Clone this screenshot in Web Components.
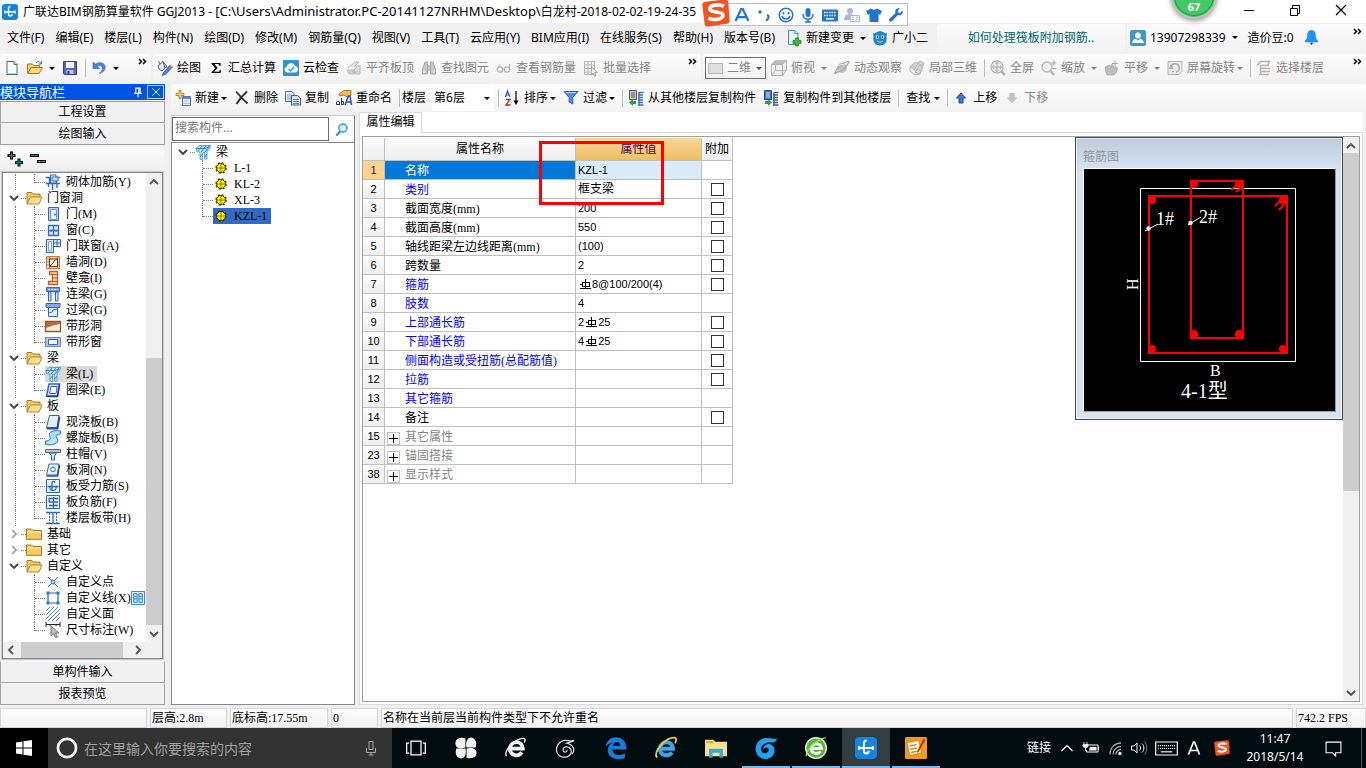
<!DOCTYPE html>
<html lang="zh-CN">
<head>
<meta charset="utf-8">
<title>广联达BIM钢筋算量软件 GGJ2013</title>
<style>
html,body{margin:0;height:100%}
body{background:#f0f0f0;overflow:hidden;color:#000;
  --ui:"Noto Sans","Noto Sans CJK SC",sans-serif;
  --song:"Liberation Serif","Noto Sans CJK SC",serif;
  font:12px/16px var(--ui)}
</style>
</head>
<body>
<ggj-app></ggj-app>
<script>
const BASE = `*{box-sizing:border-box}
button,input,select{font:inherit;color:inherit;margin:0;padding:0;border:0;background:none;border-radius:0}
button{white-space:nowrap}
a{color:inherit;text-decoration:none}`;

/* registers an element whose shadow root holds its styles and its markup (a string, or a function of the element) */
function define(name, css, html) {
  customElements.define(name, class extends HTMLElement {
    constructor() {
      super();
      this.attachShadow({ mode: 'open' });
    }
    connectedCallback() {
      const body = typeof html === 'function' ? html(this) : html;
      this.shadowRoot.innerHTML = `<style>${BASE}${css}</style>${body}`;
    }
  });
}

/* ---------- icons ---------- */
const B = '#2f66c4', L = '#cfe2fb', G = '#b4b4b4', G2 = '#e2e2e2';
const ICONS = {
  app: `<rect width="16" height="16" rx="3" fill="#1185e0"/><path d="M8.500 2.500c-1.800 0-2 1.200-2 2v5.500c0 1 .5 2 1.800 2s1.700-1 1.700-2M2.500 8h11M3 6.500v3M13 6.500v3" fill="none" stroke="#fff" stroke-width="1.500"/>`,
  newdoc: `<path d="M3 1.500h7l3 3v10H3z" fill="#fff" stroke="#51627c"/><path d="M10 1.500v3h3" fill="#d6e2f4" stroke="#51627c"/><path d="M4 13.500h8" stroke="#bcd0ee"/>`,
  open: `<path d="M.5 13V4h5l1 1.500h6V8" fill="#f6d468" stroke="#a57a1c"/><path d="M.8 13.500 4 7.500h11.500L12 13.500z" fill="#ffd978" stroke="#a57a1c"/><path d="M9 3c2-2.500 4-1.500 5 .5M14.500 1v3h-3" fill="none" stroke="#4d6fa6"/>`,
  save: `<path d="M1.500 1.500h13v13h-12l-1-1z" fill="#5a63c0" stroke="#343c8e"/><path d="M4 2h8v6H4z" fill="#f3f5fd"/><path d="M4.500 10h7v4h-7z" fill="#c3c7ea"/><path d="M5.500 11h2v3h-2z" fill="#343c8e"/>`,
  undo: `<path d="M2 2v6.500h6.500L6.300 6.300C9 4.500 12 6 11.300 9.300c-.3 1.500-1.300 2.800-3.300 4.200 4-.8 6.500-3.500 6.200-6.700C13.800 2.800 8.500 1.200 4.200 4.200z" fill="#4a83dc" stroke="#2e5fb4" stroke-width=".6"/>`,
  paint: `<path d="M1 6 6 1.500l4 5L5 11 2 9z" fill="#e2e9f2" stroke="#47607f"/><path d="M3 4 1.500 1M6 1.500 8 8" fill="none" stroke="#47607f"/><path d="M6 13 13 5l2.500 2-7 7.500-3 .8z" fill="#4a87d8" stroke="#254f8e" stroke-width=".7"/><path d="M12.500 5.500 14 4l2 2-1 1.500z" fill="#f2c24e"/>`,
  sigma: `<path d="M3.500 3h9v3h-1c-.5-1.400-1-1.900-2-1.900H6.500L9.700 8 6 11.700H9.700c1.300 0 1.800-.5 2.300-1.800h1L12.600 13H3.500v-.8L7.300 8.200 3.500 4z" fill="#000"/>`,
  cloud: `<rect width="16" height="16" rx="1" fill="#2b93dc"/><path d="M4 12.500a3 3 0 0 1-.3-5.800A4.300 4.300 0 0 1 12 6a3.300 3.300 0 0 1 .3 6.500z" fill="#fff"/><path d="m5.500 9 2 2 3.500-4" fill="none" stroke="#2b93dc" stroke-width="1.300"/>`,
  align: `<path d="M2 8 9 2h4L8 7M1 10h7v4H3zM8 9l6-4v9H9z" fill="${G2}" stroke="${G}"/><path d="M3 12h9" stroke="${G}"/>`,
  find: `<path d="M2 8 4 2h2.500v12H1.500V9zM14 8l-2-6H9.500v12h5V9zM6.500 6h3v4h-3z" fill="#c9c9c9" stroke="#a6a6a6"/><path d="M3 10v3M13 10v3" stroke="#eee"/>`,
  glasses: `<circle cx="4" cy="9.500" r="2.700" fill="none" stroke="${G}" stroke-width="1.300"/><circle cx="11" cy="9.500" r="2.700" fill="none" stroke="${G}" stroke-width="1.300"/><path d="M6.500 9h2M1.500 8l3-4M13.500 9V4" fill="none" stroke="${G}"/>`,
  batch: `<path d="M1.500 1.500h10v13h-10zM1.500 5h10M1.500 8.500h8M1.500 12h6M5 1.500v13M8.500 1.500v8" fill="none" stroke="${G}"/><path d="m8.500 7 6 5.500-3 .2 1.500 3-1.500.4-1.300-3-2 1.900z" fill="#f5f5f5" stroke="#a0a0a0"/>`,
  view2d: `<rect x=".5" y="3.500" width="14" height="10" fill="#dedede" stroke="#b5b5b5"/>`,
  cube: `<path d="M.5 4.500 4.500.5h11v10l-4 5H.5z" fill="#f1f1f1" stroke="${G}"/><path d="M.5 4.500 4.500.5h11l-4 4z" fill="#bdbdbd"/><path d="M11.500 4.500v11M.5 4.500h11l4-4M4.500 1v9.500h11M4.500 10.500l-4 5" fill="none" stroke="${G}"/>`,
  planet: `<circle cx="8" cy="8" r="5" fill="#c3c3c3"/><path d="M3 12c-4 4-2-1 2-5s12-8 9.500-4-7 9-11.500 9" fill="none" stroke="#a8a8a8" stroke-width="1.300"/><path d="M5 6c2-2 4-2 5-1" stroke="#eee" fill="none"/>`,
  local3d: `<path d="m1 7 5-5 3 2-4 6zM6 12l4-7 4 2-3 7zM8 3l3-2 4 2-1 3z" fill="#d7d7d7" stroke="${G}"/><path d="m3 5 4 3M8 9l4 2M1 7v4l5 4 5-1" fill="none" stroke="${G}"/>`,
  full: `<circle cx="7" cy="7" r="6" fill="#eee" stroke="${G}" stroke-width="1.300"/><path d="M7 2.500v9M2.500 7h9M5.500 4 7 2.300 8.500 4M5.500 10 7 11.700 8.500 10M4 5.500 2.300 7 4 8.500M10 5.500 11.700 7 10 8.500" fill="none" stroke="#a8a8a8"/><path d="m11 11 4 4" stroke="#b5b5b5" stroke-width="2.500"/>`,
  zoom: `<circle cx="6" cy="7" r="5" fill="#f2f2f2" stroke="${G}" stroke-width="1.300"/><path d="m9.500 11 3.500 4" stroke="#b5b5b5" stroke-width="2.500"/><path d="M10.500 3h5M13 .5v5M11.500 8.500h4" stroke="#a8a8a8" stroke-width="1.200"/>`,
  pan: `<path d="M3 15 1.500 11 1 7l2-.5 1 3-.5-4 2-.5 1.500 3V5l1.500-.5L10 8l1.500-1.500 2 1.500-1 4-2.500 3z" fill="#bebebe" stroke="#a9a9a9" stroke-width=".8"/><path d="M11 .5v6M8 3.500h6" stroke="#a8a8a8"/>`,
  rotate: `<path d="M1 1.500h14v10l-3 3H1z" fill="#e8e8e8" stroke="${G}"/><path d="M4 7a4.200 4.200 0 1 1 5 5" fill="none" stroke="#aaa" stroke-width="1.500"/><path d="m4 4.500-1.500 4H6zM5 11.500h2" fill="#bbb" stroke="#aaa"/>`,
  floors: `<path d="m1.500 5.500 3-4h9l-2 4M5 8.500h9M5 11.500h9M3 14.500h10M4 5.500h9M4.500 6v9" fill="none" stroke="${G}" stroke-width="1.400"/>`,
  change: `<path d="M2.500.5H9l3 3v11H2.500z" fill="#e5f4fc" stroke="#4a8fb5"/><path d="M9 .5v3h3" fill="#fff" stroke="#4a8fb5"/><path d="M9.500 8h3v2.500H15v3h-2.500V16h-3v-2.500H7v-3h2.500z" fill="#42b531" stroke="#1f7d17" stroke-width=".7"/>`,
  robot: `<path d="M1 3.500 3.500 3C6 .5 10 .5 12.500 3l2.500.5L14.500 7c1 5-2 8.500-6.500 8.500S.5 12 1.500 7z" fill="#1d86d2"/><circle cx="5.500" cy="7" r="1.700" fill="#fff"/><circle cx="10.500" cy="7" r="1.700" fill="#fff"/><circle cx="5.700" cy="7" r=".9" fill="#0a3a6a"/><circle cx="10.300" cy="7" r=".9" fill="#0a3a6a"/><path d="M5.500 11c1.500 1.500 3.500 1.500 5 0" fill="none" stroke="#d9f0ff"/>`,
  user: `<rect width="16" height="16" rx="2" fill="#3f96cc"/><circle cx="8" cy="5.500" r="2.900" fill="#fff"/><path d="M2 13c1-3.500 3-4.300 4-4.300l2 2 2-2c1 0 3 .8 4 4.300z" fill="#fff"/>`,
  bell: `<path d="M8 0c-3.500.5-4.500 2.500-4.500 5.500C3.500 9 2.500 10 1 11.500V13h14v-1.500C13.500 10 12.500 9 12.500 5.500 12.500 2.500 11.500.5 8 0z" fill="#1e90ff"/><path d="M6 13.500h4L8 16z" fill="#123a78"/>`,
  create: `<path d="M4 .5h2v3h3v2H6v3H4v-3H1v-2h3z" fill="#ffdb48" stroke="#99752a" stroke-width=".8"/><path d="M7.500 6.500h8v9h-8z" fill="#fff" stroke="#5a76b0"/><path d="M8 7h7v2H8z" fill="#5f8bd2"/><path d="M8 11h7M8 13.500h7M11 9v6" stroke="#a8bfe4"/>`,
  remove: `<path d="M2 1.500c3 3.500 7 8 11.500 12M13 1.500C9 5 5 9.500 2.500 14" fill="none" stroke="#333" stroke-width="1.900"/>`,
  copy: `<path d="M.5 1.500h6l2.500 2v8H.5z" fill="#e7effc" stroke="#4a6fae"/><path d="M2 5h5M2 7h5M2 9h5" stroke="#7fa0d8"/><path d="M6.500 5.500h6l3 2.500v7h-9z" fill="#d6e4fa" stroke="#3b62a8"/><path d="M8 9.500h6M8 11.500h6M8 13.500h6" stroke="#5c86cf"/>`,
  rename: `<path d="M3 4 8 .5h7V5L12 7 7 5 4 6z" fill="#f2bd42" stroke="#8e6920" stroke-width=".8"/><path d="M.5 14.500v-2.500l1.500-1 1.500 1v2.500H.5M5.500 8v6.500h2v-3h-2" fill="none" stroke="#333"/><path d="m9 15 3.500-9h1.500l1.500 9M10.500 12h4" fill="none" stroke="#2457ad" stroke-width="1.500"/>`,
  sort: `<path d="m1.500 7 2-6 2.500 6M2 5h3.500" fill="none" stroke="#2f4fae" stroke-width="1.200"/><path d="M2 9.500h4L2 15h4.500" fill="none" stroke="#9c3434" stroke-width="1.300"/><path d="M12 1v12" stroke="#000" stroke-width="1.200"/><path d="M9.500 10.500h5L12 15z"/>`,
  filter: `<path d="M1 1.500h14L9.800 7.500V14l-3.600-2V7.500z" fill="#5690e4" stroke="#2b5dad"/><path d="M3 2.500h10" stroke="#bcd6fa"/>`,
  fromfloor: `<path d="M1.500.5h7v9h-7z" fill="#ccc" stroke="#555"/><path d="M3 3h4M3 5h4M3 7h4" stroke="#555"/><path d="M8 11H5V9L1 12.500 5 16v-2h3z" fill="#2f9b48"/><path d="M11 2.500h4.500M10 5h5M10 7.500h5M10 10h5M10 12.500h5M10 15h5.500M11 2v13" stroke="#3a72ca" stroke-width="1.400"/>`,
  tofloor: `<path d="M1.500.5h7v9h-7z" fill="#3f74c4" stroke="#294b85"/><path d="M3 3h4M3 5h4M3 7h4" stroke="#d7e5fa"/><path d="M2 11h3V9l4 3.500L5 16v-2H2z" fill="#2f9b48"/><path d="M11 2.500h4.500M10 5h5M10 7.500h5M10 10h5M10 12.500h5M10 15h5.500M11 2v13" stroke="#4a5a74" stroke-width="1.300"/>`,
  up: `<path d="M8 3 3.500 8H6v5h4V8h2.500z" fill="#3f74dc" stroke="#2348a0"/>`,
  down: `<path d="M8 12.500 3.500 8H6V3.500h4V8h2.500z" fill="#c4c4c4" stroke="#b5b5b5"/>`,
  folderopen: `<path d="M1 14V2.500h5L7.500 4H14v4" fill="#f0c860" stroke="#a37a2b"/><path d="M1.200 14 4.500 7H16l-3 7z" fill="#ffdf8b" stroke="#b38836"/>`,
  folder: `<path d="M.5 13.500V3h5L7 4.500h8.500v9z" fill="#f7cb63" stroke="#a37a2b"/><path d="M1 6h14" stroke="#fff0b8"/><path d="M1.500 13h13" stroke="#d9a839"/>`,
  masonry: `<path d="M1 3.500h14M1 9.500h14M4.500 4v5M11.500 4v5M3.500 10v3M7.500 10v6M12 10v4" fill="none" stroke="${B}" stroke-width="1.400"/><path d="M5.500 1h5.500v8H5.500z" fill="#eef5ff" stroke="${B}"/><path d="M7 3h6v4H7z" fill="${L}" stroke="${B}"/>`,
  door: `<path d="M3.500 1.500h10v13h-10z" fill="#b9d4fa" stroke="${B}"/><path d="M5.500 3.500h6v10h-6z" fill="#eef6ff" stroke="#6c98df"/><circle cx="10" cy="8.500" r="1" fill="${B}"/>`,
  window: `<path d="M3.500 3.500h10v10h-10zM8.500 3.500v10M3.500 8.500h10" fill="#d9e9ff" stroke="${B}" stroke-width="1.300"/><path d="M6 8v2M11 8v2" stroke="${B}"/>`,
  doorwin: `<path d="M1.500 1.500h7v13h-7zM8.500 1.500h7v7h-7zM12 1.500v7M8.500 5h7" fill="#dbeaff" stroke="${B}"/><path d="M3.500 3.500h3v9h-3z" fill="#fff" stroke="#7da6e6"/>`,
  wallhole: `<path d="M1.500 2.500h13v12h-13zM1.500 5h13M1.500 8h13M1.500 11h13M4.500 2.500v12M12.500 2.500v12" fill="#ffe9d3" stroke="#cb7434"/><path d="M4.500 5h8v7.500h-8z" fill="#fff" stroke="#6a3716"/><path d="m5 12 3-3 1-2 3-2" fill="none" stroke="#6a3716"/>`,
  niche: `<path d="M4.500 1.500h8v13h-9V11.500h4v-7h-3z" fill="#ffd3ac" stroke="#bc5f22" stroke-width="1.300"/><path d="M8 4.500h4M8 8h4M8 11.500h4" stroke="#bc5f22"/>`,
  linkbeam: `<path d="M1.500 1.500h13v4h-13z" fill="#6f9de4" stroke="${B}"/><path d="M3 3.500h10" stroke="#fff" stroke-dasharray="2 1"/><path d="M3.500 6h2.500v9H3.500zM10.500 6H13v9h-2.500z" fill="${L}" stroke="${B}"/>`,
  lintel: `<path d="M1 1.500h14v4H1z" fill="#80abeb" stroke="${B}"/><path d="M3.500 5.500h9v9h-9z" fill="#e9f3ff" stroke="${B}"/><path d="m4 11 3-1 1-2 4-1" fill="none" stroke="${B}"/>`,
  striphole: `<path d="M.5 3.500h15v10H.5z" fill="#fff0e2" stroke="#9f532a" stroke-width="1.300"/><path d="M1 10c4-1 6-3 14-4V4H1z" fill="#b96a3d"/>`,
  stripwin: `<path d="M.5 3.500h15v9H.5z" fill="#a7c5f5" stroke="#6a90cc"/><path d="M3.500 5.500h9v5h-9z" fill="#fff" stroke="${B}"/>`,
  beam: `<path d="m1 4.500 3-3h11.500l-1 3.500-2.500 2v8H9.500V8L7.500 9v6.500H5V8L2 8z" fill="#bde5fa" stroke="#3d96cf" stroke-width=".8"/><path d="M1 4.500h10l4-3M3 7l4-5M6 8l5-6M10 8l4-5M5 13l2.500-3M9.500 13l2.500-3" fill="none" stroke="#2c86c2"/>`,
  ring: `<path d="M4 2h10.500l-2 12H1.500z" fill="#dceaff" stroke="${B}" stroke-width="1.500"/><path d="M6 4.500h6l-1 7H4.500z" fill="#fff" stroke="${B}"/><path d="M1.500 14.500h11l2-12" fill="none" stroke="#1a3d8c" stroke-width="1.500"/>`,
  slab: `<path d="M4.500 1.500H14l-2 12H1.500z" fill="#e2eefe" stroke="${B}"/><path d="M1.500 14.500h11l2-12" fill="none" stroke="#254b96" stroke-width="1.800"/>`,
  spiral: `<path d="M15.500 1C9-.5 3 2 4.500 5.500 6 8.500 5 11 .5 11v3.500c7 1.500 14-1 12-5.500C10.500 6 10 4.500 15.500 4z" fill="#a9dcf5" stroke="#1e83b9"/><path d="M4 13c4 0 6-2 5-4" fill="none" stroke="#fff"/>`,
  cap: `<path d="M.5 3.500h15v3H.5z" fill="#c1c7cf" stroke="#5c6670"/><path d="M4.500 7h7L9.500 10v4h-3v-4z" fill="${L}" stroke="${B}"/>`,
  slabhole: `<path d="M4 2h10l-1.500 11H1.500z" fill="#e9f2ff" stroke="${B}"/><path d="M1.500 14h11L14.500 3" fill="none" stroke="#254b96" stroke-width="1.500"/><circle cx="8" cy="7.500" r="2.300" fill="#fff" stroke="${B}"/>`,
  rebar: `<path d="M1.500 1.500h13v13h-13z" fill="#eaf3ff" stroke="${B}"/><path d="M2.500 8.500h11M7 12V4.500C7 3 9.500 3 10 4.500M5 8.500c-1 3 1.500 4 3 4s4-1 3-4" fill="none" stroke="${B}" stroke-width="1.300"/>`,
  negrebar: `<path d="M1.500 1.500h13v13h-13z" fill="#eaf3ff" stroke="${B}"/><path d="M4 4.500h9M4 8h9M4 11.500h9M8.500 3v11M4 4v4" fill="none" stroke="${B}" stroke-width="1.300"/>`,
  strip: `<path d="M1 2.500h14M1 13.500h14" stroke="${B}" stroke-width="1.500"/><path d="M4.500 3v11M11.500 3v11" stroke="${B}" stroke-dasharray="2 1"/><path d="M8 3v10" stroke="${B}" stroke-width="1.300"/>`,
  point: `<path d="m3 3 10 10M13 3 3 13" stroke="${B}"/><circle cx="8" cy="8" r="2" fill="#a8d1fa" stroke="${B}"/>`,
  line: `<path d="M3 3h10v10H3z" fill="#f5faff" stroke="${B}" stroke-width="1.200"/><path d="M1.500 1.500h3v3h-3zM11.500 1.500h3v3h-3zM1.500 11.500h3v3h-3zM11.500 11.500h3v3h-3z" fill="#3a72ca"/>`,
  area: `<path d="M1 5 5 1M1 9l8-8M1 13 13 1M3 15 15 3M7 15l8-8M11 15l4-4" stroke="#4b84d6"/>`,
  dim: `<path d="M1 0v5M15 0v5M1 2.500h14M5 2v2M11 2v2" stroke="#222"/><path d="m6 4 8 7h-3.500l2 4-2 .8-2-4L6 14z" fill="#bbb" stroke="#777"/>`,
  gear: `<circle cx="8" cy="8" r="4.500" fill="#fff200" stroke="#1e1e00" stroke-width=".8"/><circle cx="8" cy="8" r="5.200" fill="none" stroke="#3a3a00" stroke-width="1.200" stroke-dasharray="2.200 1.880"/><path d="M8 4.500v7M4.500 8h7" stroke="#1e1e00" stroke-dasharray="1 1"/>`,
  search: `<circle cx="9.500" cy="6.500" r="4.300" fill="#d9f0ff" stroke="#49a5dc" stroke-width="1.800"/><path d="m6.500 10-4 4.500" stroke="#2b84c1" stroke-width="2.300"/>`,
  plusplus: `<path d="M.5 4.500h8M4.500.5v8M8 11.500h8M12 7.500v8" stroke="#000" stroke-width="3"/><path d="M1.500 4.500h6M4.500 1.500v6M9 11.500h6M12 8.500v6" stroke="#079090" stroke-width="1.200"/>`,
  minusminus: `<path d="M0 4.500h9M7 10.500h9" stroke="#000" stroke-width="3"/><path d="M1 4.500h7M8 10.500h7" stroke="#079090" stroke-width="1.200"/>`,
  pin: `<path d="M5 3.500h6M5.500 3.500v6M10.500 3.500v6M9 3.500v6M3.500 9.500h9M8 9.500V14" fill="none" stroke="#fff" stroke-width="1.300"/>`,
  close: `<path d="m3 3 10 10M13 3 3 13" stroke="currentColor" stroke-width="1.200"/>`,
  min: `<path d="M3 8.500h10" stroke="currentColor"/>`,
  restore: `<path d="M3.500 6.500h7v7h-7zM5.500 6V3.500h7v8H11" fill="none" stroke="currentColor"/>`,
  book: `<path d="M.5.5h15v15H.5z" fill="#eaf5ff" stroke="#1875c9"/><path d="M3 3h4v10H3zM9 3h4v10H9z" fill="#cbe6fc" stroke="#1875c9"/><path d="M3.500 6h3M3.500 9h3M9.500 6h3M9.500 9h3" stroke="#1875c9"/>`,
  chevd: `<path d="m4 6 4 4 4-4" fill="none" stroke="#404040" stroke-width="1.800"/>`,
  chevr: `<path d="m6 4 4 4-4 4" fill="none" stroke="#999" stroke-width="1.600"/>`,
  sup: `<path d="m4 11 4-4 4 4" fill="none" stroke="#555" stroke-width="1.900"/>`,
  sdown: `<path d="m4 6 4 4 4-4" fill="none" stroke="#555" stroke-width="1.900"/>`,
  sleft: `<path d="M10 4 6 8l4 4" fill="none" stroke="#555" stroke-width="1.900"/>`,
  sright: `<path d="m6 4 4 4-4 4" fill="none" stroke="#555" stroke-width="1.900"/>`,
  more: `<path d="m4 5 2.500 2.500L4 10M8 5l2.500 2.500L8 10" fill="none" stroke="#000" stroke-width="1.500"/>`,
  /* input method bar */
  sogou: `<path d="M2 1.500 13 .3c1.200 0 1.700.4 2 1.500l.8 10.500c0 1-.3 1.500-1.500 1.800L3.500 15.700c-1 .2-1.700-.2-2-1.300L.2 3.500C0 2.300.8 1.700 2 1.500z" fill="#f4511e"/><path d="M12.500 4.200C10 2.700 4.500 3.300 4.500 5.500c0 2.600 7.800 1.300 7.500 4-.2 2-5 3-8.300 1.400" fill="none" stroke="#fff" stroke-width="2.100"/>`,
  imeA: `<path d="m1.500 14 5.700-12h1.600l5.700 12M4 10.200h8" fill="none" stroke="#2176c9" stroke-width="2.200"/>`,
  punct: `<circle cx="4" cy="5" r="1.700" fill="#2176c9"/><path d="M11 8c2.500.5 2 4-1 5.500" fill="none" stroke="#2176c9" stroke-width="2"/>`,
  smile: `<circle cx="8" cy="8" r="6.800" fill="none" stroke="#2176c9" stroke-width="1.500"/><path d="M5.500 5v2.500M10.500 5v2.500" stroke="#2176c9" stroke-width="1.700"/><path d="M4 9c1 4 7 4 8 0" fill="none" stroke="#2176c9" stroke-width="1.500"/>`,
  mic: `<rect x="5.500" y="1" width="5" height="9" rx="2.500" fill="#2176c9"/><path d="M3 7c0 7 10 7 10 0M8 12v3M5 15h6" fill="none" stroke="#2176c9" stroke-width="1.500"/>`,
  kbd: `<rect y="2.500" width="16" height="12" rx="1" fill="#2176c9"/><path d="M2 5.500h12M2 8.500h12" stroke="#fff" stroke-width="1.500" stroke-dasharray="1.500 1"/><path d="M4 11.800h8" stroke="#fff" stroke-width="1.500"/>`,
  person: `<circle cx="6" cy="4" r="3" fill="#a9bad2"/><path d="M0 13c0-5 3-6 6-6s4 1 5 2v4z" fill="#a9bad2"/><path d="M6.500 8.500h9v6h-9z" fill="#fff" stroke="#a9bad2"/><path d="M8 10.500h2M12 10.500h2M8 12.500h2M12 12.500h2" stroke="#a9bad2"/>`,
  shirt: `<path d="M5 1.500c1 1.500 5 1.500 6 0l5 2.500-2 4-1.500-1v8h-9V7L2 8 0 4z" fill="#2176c9"/>`,
  wrench: `<path d="M14.500 3.500 12 6l-2-.5L9.700 3.800 12 1.500C9 .7 6.500 3 7.500 6l-6 5.700c-1.500 1.500.8 4 2.500 2.500l5.700-6C13 9 15.700 6.500 14.500 3.500z" fill="#2176c9"/>`,
  /* taskbar */
  win: `<path d="m0 2.500 6.500-1v6H0zM7.500 1.300 16 0v7.500H7.500zM0 8.500h6.500v6L0 13.500zM7.500 8.500H16V16l-8.500-1.200z" fill="#fff"/>`,
  cortana: `<circle cx="8" cy="8" r="6.600" fill="none" stroke="#f5f5f5" stroke-width="2"/>`,
  tmic: `<path d="M6 1.500h4v8H6zM3.500 8v4.500h9V8M8 12.500V15M5.500 15h5" fill="none" stroke="#aaa"/>`,
  taskview: `<path d="M4 2.500h8v11H4zM2.500 4h-2v8h2M13.500 4h2v8h-2" fill="none" stroke="#fff" stroke-width="1"/>`,
  fan: `<path d="M7.600 7.600C3 9 .3 7.500.3 4.500S3.500-.2 7.600 1zM8.400 7.600C7.500 3.500 9 .3 11.500.3s5 3 3.500 7.300zM8.400 8.400c4.500-1.200 7.300.5 7.300 3.200s-3 4.600-7.300 3.400zM7.600 8.400c.9 4.100-.5 7.300-3.100 7.300s-5-3-3.500-7.300z" fill="#f1f1f1"/>`,
  ewhite: `<path d="M3.500 8.500H13c0-6.500-9-6-9.500 0 .2 5.500 6.500 6 8.800 2.700" fill="none" stroke="#f1f1f1" stroke-width="2.700"/><path d="M1 14C-1 10 7 1 13.500 1c1.500 0 1.300 1.800.5 3" fill="none" stroke="#f1f1f1"/>`,
  gwhite: `<path d="M14 2.500C10 3.500 8 1.500 5 3 0 6-.5 12.500 5 14.500c4.500 1 8-2 6.500-5.500-1.500-3-6.500-2-5.500 1 .7 1.500 2.800 1 2.800-.3M14 2.500C12 4 10 4 8.500 4.500 13 5.500 15 9 12.500 12.500" fill="none" stroke="#ddd" stroke-width=".9"/>`,
  edge: `<path d="M.5 7C1.500-2 15-2.500 15.500 7.500V9H5.500c.2 4.800 5.800 5 9 2.800V15C9 17.500 2.500 15.500 2 10c0-3 1.600-5 4.300-6C3.800 4 1.700 5.300.5 7zM5.800 6.500h5.400c-.2-4-5-3.500-5.400 0z" fill="#0f7fe0" fill-rule="evenodd"/>`,
  ie: `<path d="M3.500 8.500H13c0-6.500-9-6-9.500 0 .2 5.500 6.500 6 8.800 2.700" fill="none" stroke="#3ba4ec" stroke-width="3"/><path d="M1.500 15C-1.500 11 7 .5 14 .5c2 0 1.500 2.500.5 4" fill="none" stroke="#f5c62f" stroke-width="1.300"/>`,
  explorer: `<path d="M0 2h6l1.500 1.500H16V14H0z" fill="#fbe08b"/><path d="M1 3h5v1.500H1z" fill="#e8a33a"/><path d="M3 15V8.500h10V15h-2.500v-3.500h-5V15z" fill="#34a6e3"/>`,
  gblue: `<path d="M16 1C12 2 8-.8 4 2-2 6 0 15 7 16c6 .3 9-6 6-9.500C10 3.500 6 6 6 9c1.500-2 4-2 4 .5S5 13 4.500 9.500C4 5 9 3 13 4c1 0 2.500-1 3-3z" fill="#1da4f4"/>`,
  egreen: `<circle cx="8" cy="8" r="7.500" fill="#55b72d" stroke="#f0f0f0"/><path d="M4.500 8.500h7.500c0-5-7-4.500-7.500 0 .2 4 4.800 4.500 6.800 2" fill="none" stroke="#fff" stroke-width="2"/><path d="M1 14C0 10 8 2 15 .500" fill="none" stroke="#8fe25f"/>`,
  note: `<rect width="16" height="16" rx="1" fill="#f39a1b"/><path d="m1.500 4 8.500-1.500 2 9-8.500 2z" fill="#fff6dc" stroke="#c86c0c" stroke-width=".5"/><path d="m3.500 6.500 5-1M4 9l4.500-1M4.500 11.300l4-.9" stroke="#c57a2c"/><path d="M9 10 13.500 1l1.500.8-5 9-1.300.7z" fill="#b13c13"/>`,
  tup: `<path d="m2.500 11 5.500-5.500 5.500 5.500" fill="none" stroke="#fff" stroke-width="1.200"/>`,
  battery: `<path d="M5 5h10v7H3.500v-2" fill="none" stroke="#fff"/><path d="M7 7h6.500v3.500H6z" fill="#fff"/><path d="M1 2v2M4 2v2M0 4.500h5v2L2.500 8.500 0 6.500zM2.500 8v3" fill="#fff" stroke="#fff" stroke-width=".8"/><path d="M15.700 7v3" stroke="#fff"/>`,
  wifi: `<path d="M3 14.500A11 11 0 0 1 14 3M6 14.500A8 8 0 0 1 14 6.500M9 14.500a5 5 0 0 1 5-5" fill="none" stroke="#aaa" stroke-width="1.300"/><circle cx="13" cy="13.500" r="1.700" fill="#fff"/>`,
  volume: `<path d="M.5 6h2.500l3-3v10L3 10H.5zM8.500 5.500c1.500 1.500 1.500 3.500 0 5M11 3.500c2.500 2.500 2.500 6.500 0 9" fill="none" stroke="#fff"/><path d="M13.500 1.500c3 3.500 3 9.500 0 13" fill="none" stroke="#777"/>`,
  tkbd: `<path d="M.5 3.500h15v9H.5z" fill="none" stroke="#fff" stroke-width=".8"/><path d="M2 6h12M2 8h12" stroke="#fff" stroke-width=".8" stroke-dasharray=".8 .6"/><path d="M4 10.300h8" stroke="#fff" stroke-width=".8"/>`,
  tA: `<path d="M2.500 14.500 7.500 2h1l5 12.500M4.500 10.500h7" fill="none" stroke="#fff" stroke-width="1.700"/>`,
  notice: `<path d="M1 2h14v10h-5v3l-3-3H1z" fill="none" stroke="#fff"/>`
};
define('ui-icon', `:host{display:block;flex:none;width:var(--s,16px);height:var(--s,16px)}svg{display:block;width:100%;height:100%;overflow:visible}`,
  el => `<svg viewBox="0 0 16 16" aria-hidden="true">${ICONS[el.getAttribute('name')] || ''}</svg>`);

/* ---------- toolbar parts ---------- */
define('tool-button', `
:host{display:block;flex:none}
button{display:flex;align-items:center;gap:4px;height:22px}
:host([disabled]) button{color:#858585}
i{border:3px solid transparent;border-top-color:currentColor;border-bottom:0;margin-left:2px}
:host([caret=tight]) i{margin-left:-2px}
:host([noicon][caret=tight]) i{margin-left:0}
span:empty{display:none}`,
  el => {
    const ic = el.getAttribute('icon'), tx = el.getAttribute('text') || '';
    return `<button ${el.hasAttribute('disabled') ? 'disabled' : ''} aria-label="${tx || ic}">${ic ? `<ui-icon name="${ic}"></ui-icon>` : ''}<span>${tx}</span>${el.hasAttribute('caret') ? '<i></i>' : ''}</button>`;
  });
define('tool-strip', `
:host{display:flex;align-items:center;gap:7px;height:28px;padding:0 4px;background:linear-gradient(#fdfdfd,#f1f1f1);border-radius:3px;overflow:hidden}
::slotted(hr){width:1px;height:18px;margin:0 -2px 0 0;border:0;background:#bdbdbd;flex:none}`, `<slot></slot>`);

/* ---------- title bar ---------- */
define('title-bar', `
:host{display:flex;position:relative;height:23px;background:#fff;align-items:center;padding-left:2px}
h1{font:inherit;margin:0 0 0 5px;flex:1;white-space:nowrap}
h1 span{font-size:13px}
.w{display:flex;height:20px;align-self:flex-start;align-items:center;gap:30px;padding-right:17px}
.w button{display:block}
.ime{position:absolute;z-index:5;left:712px;top:3px;width:196px;height:23px;background:#fff;border:1px solid #b4c3d6;display:flex;align-items:center;gap:6px;padding-left:21px}
.ime .s{position:absolute;left:-11px;top:-5px;--s:28px}
.badge{position:absolute;z-index:5;left:1171px;top:-27px;width:46px;height:46px;border-radius:50%;background:#44c767;border:2px solid #b9c5bc;outline:1px solid #25964a;outline-offset:-4px;box-shadow:0 2px 5px #0006;color:#fff;font:bold 11px/16px var(--ui);text-align:center;padding-top:24px}`, `
<ui-icon name="app"></ui-icon>
<h1>广联达BIM钢筋算量软件 GGJ2013 - <span>[C:\\Users\\Administrator.PC-20141127NRHM\\Desktop\\</span>白龙村-2018-02-02-19-24-35</h1>
<div class="ime"><ui-icon class="s" name="sogou"></ui-icon><ui-icon name="imeA"></ui-icon><ui-icon name="punct"></ui-icon><ui-icon name="smile"></ui-icon><ui-icon name="mic"></ui-icon><ui-icon name="kbd"></ui-icon><ui-icon name="person"></ui-icon><ui-icon name="shirt"></ui-icon><ui-icon name="wrench"></ui-icon></div>
<div class="badge">67</div>
<div class="w"><button aria-label="最小化"><ui-icon name="min"></ui-icon></button><button aria-label="还原"><ui-icon name="restore"></ui-icon></button><button aria-label="关闭"><ui-icon name="close"></ui-icon></button></div>`);

/* ---------- menu bar ---------- */
const MENU = ['文件(F)', '编辑(E)', '楼层(L)', '构件(N)', '绘图(D)', '修改(M)', '钢筋量(Q)', '视图(V)', '工具(T)', '云应用(Y)', 'BIM应用(I)', '在线服务(S)', '帮助(H)', '版本号(B)'];
define('menu-bar', `
:host{display:flex;height:31px;align-items:flex-start;padding-top:1px;background:#f0f0f0}
nav{display:flex;align-items:center;height:28px;gap:11px;padding-left:7px;flex:0 0 937px}
nav tool-button+tool-button{margin-left:-5px}
.p{display:flex;align-items:center;height:27px;background:linear-gradient(#fbfbfb,#f2f2f2);border-radius:3px}
.tip{flex:0 0 188px;justify-content:center;color:#00676b;margin-right:2px}
.u{flex:1;gap:10px;padding:0 0 0 3px}
.u ui-icon:last-child{margin:-12px 0 0 auto}
.bell{--s:15px}`, `
<nav>${MENU.map(m => `<button>${m}</button>`).join('')}<tool-button icon="change" text="新建变更" caret></tool-button><tool-button icon="robot" text="广小二"></tool-button></nav>
<div class="p tip"><a href="#">如何处理筏板附加钢筋..</a></div>
<div class="p u"><tool-button icon="user" text="13907298339" caret></tool-button><a href="#">造价豆:0</a><ui-icon class="bell" name="bell"></ui-icon><ui-icon name="more"></ui-icon></div>`);

/* ---------- main tool bar ---------- */
const b = (icon, text, caret, off) => `<tool-button icon="${icon}" text="${text}"${caret ? ` caret="${caret}"` : ''}${off ? ' disabled' : ''}></tool-button>`;
define('main-tools', `
:host{display:flex;height:30px;gap:2px}
.m{margin:-12px -4px 0 auto}
.a{flex:0 0 151px}.b{flex:0 0 548px;}.c{flex:1;padding-left:2px}
.combo{display:flex;align-items:center;width:61px;height:22px;border:1px solid #6e6e6e;padding:0 3px 0 2px;color:#858585;gap:3px;margin-right:-2px}
select{appearance:none;width:30px;opacity:1}
i{border:3px solid transparent;border-top-color:#555;border-bottom:0}`, `
<tool-strip class="a">${b('newdoc', '')}${b('open', '', 'wide')}${b('save', '')}<hr>${b('undo', '', 'wide')}<ui-icon class="m" name="more"></ui-icon></tool-strip>
<tool-strip class="b">${b('paint', '绘图')}${b('sigma', '汇总计算')}${b('cloud', '云检查')}${b('align', '平齐板顶', 0, 1)}${b('find', '查找图元', 0, 1)}${b('glasses', '查看钢筋量', 0, 1)}${b('batch', '批量选择', 0, 1)}<ui-icon class="m" name="more"></ui-icon></tool-strip>
<tool-strip class="c"><label class="combo"><ui-icon name="view2d"></ui-icon><select aria-label="视图维度"><option>二维</option></select><i></i></label>${b('cube', '俯视', 'wide', 1)}${b('planet', '动态观察', 0, 1)}${b('local3d', '局部三维', 0, 1)}<hr>${b('full', '全屏', 0, 1)}${b('zoom', '缩放', 'wide', 1)}${b('pan', '平移', 'wide', 1)}${b('rotate', '屏幕旋转', 'tight', 1)}<hr>${b('floors', '选择楼层', 0, 1)}<ui-icon class="m" name="more"></ui-icon></tool-strip>`);

define('part-tools', `
:host{display:block}
label{display:flex;align-items:center;height:26px;gap:6px;margin:0 -3px 0 -3px}
.s{display:flex;align-items:center;height:26px;background:#fff;width:62px;padding:0 4px 0 2px}
select{appearance:none;flex:1;min-width:0}
i{border:3px solid transparent;border-top-color:#000;border-bottom:0}
.f{margin-left:2px}`, `
<tool-strip>${b('create', '新建', 'tight')}${b('remove', '删除')}${b('copy', '复制')}${b('rename', '重命名')}<hr><label>楼层<span class="s"><select><option>第6层</option></select><i></i></span></label><hr>${b('sort', '排序', 'tight')}${b('filter', '过滤', 'tight')}<hr>${b('fromfloor', '从其他楼层复制构件')}${b('tofloor', '复制构件到其他楼层')}<hr><tool-button class="f" noicon text="查找" caret="tight"></tool-button><hr>${b('up', '上移')}${b('down', '下移', 0, 1)}</tool-strip>`);

/* ---------- tree rows ---------- */
define('tree-row', `
:host{display:flex;height:16px;align-items:center;font:12px/16px var(--song);white-space:nowrap}
.g{position:relative;flex:none;width:21px;height:16px}
.v{margin-left:12px;height:16px;border-left:1px dotted #7d7d7d}
.g.k .v{margin-left:10px}
.g.end .v{height:9px}
.h{position:absolute;left:11px;right:0;top:8px;border-top:1px dotted #7d7d7d}
.g.x{width:18px}
.x ui-icon{margin-left:3px}
.d{width:5px;border-top:1px dotted #7d7d7d}
button{display:flex;align-items:center;gap:5px;height:16px;padding-right:4px}
:host([selected]) button{background:var(--sel,#d9d9d9)}
slot{display:block}`,
  el => {
    const kid = el.getAttribute('level') === '2';
    const lead = kid
      ? `<span class="g">${el.hasAttribute('guide') ? '<div class="v"></div>' : ''}</span><span class="g k${el.hasAttribute('last') ? ' end' : ''}"><div class="v"></div><div class="h"></div></span>`
      : `<span class="g x"><ui-icon name="${el.hasAttribute('closed') ? 'chevr' : 'chevd'}"></ui-icon></span><span class="d"></span>`;
    return `${lead}<button><ui-icon name="${el.getAttribute('icon')}"></ui-icon><span>${el.getAttribute('text')}</span></button><slot></slot>`;
  });

define('scroll-bar', `
:host{display:flex;flex-direction:column;width:16px;flex:none;background:#f0f0f0}
:host([horizontal]){flex-direction:row;width:auto;height:16px}
.t{background:#cdcdcd;flex:0 0 auto}
.sp{flex:1}`,
  el => {
    const h = el.hasAttribute('horizontal'), d = h ? 'width' : 'height';
    return `<ui-icon name="${h ? 'sleft' : 'sup'}"></ui-icon><div style="${d}:${el.getAttribute('before')}"></div><div class="t" style="${d}:${el.getAttribute('size')}"></div><div class="sp"></div><ui-icon name="${h ? 'sright' : 'sdown'}"></ui-icon>`;
  });

/* ---------- module navigator ---------- */
const NAV = [
  ['k', 'masonry', '砌体加筋(Y)', 'guide last'],
  ['f', 'folderopen', '门窗洞'],
  ['k', 'door', '门(M)', 'guide'], ['k', 'window', '窗(C)', 'guide'], ['k', 'doorwin', '门联窗(A)', 'guide'], ['k', 'wallhole', '墙洞(D)', 'guide'],
  ['k', 'niche', '壁龛(I)', 'guide'], ['k', 'linkbeam', '连梁(G)', 'guide'], ['k', 'lintel', '过梁(G)', 'guide'], ['k', 'striphole', '带形洞', 'guide'], ['k', 'stripwin', '带形窗', 'guide last'],
  ['f', 'folderopen', '梁'],
  ['k', 'beam', '梁(L)', 'guide selected'], ['k', 'ring', '圈梁(E)', 'guide last'],
  ['f', 'folderopen', '板'],
  ['k', 'slab', '现浇板(B)', 'guide'], ['k', 'spiral', '螺旋板(B)', 'guide'], ['k', 'cap', '柱帽(V)', 'guide'], ['k', 'slabhole', '板洞(N)', 'guide'],
  ['k', 'rebar', '板受力筋(S)', 'guide'], ['k', 'negrebar', '板负筋(F)', 'guide'], ['k', 'strip', '楼层板带(H)', 'guide last'],
  ['f', 'folder', '基础', 'closed'], ['f', 'folder', '其它', 'closed'],
  ['f', 'folderopen', '自定义'],
  ['k', 'point', '自定义点', ''], ['k', 'line', '自定义线(X)', ''], ['k', 'area', '自定义面', ''], ['k', 'dim', '尺寸标注(W)', 'last']
];
define('module-nav', `
:host{display:flex;flex-direction:column;width:165px;flex:none}
header{display:flex;align-items:center;height:16px;background:#0054e3;color:#fff;font:13px/16px var(--ui);padding-right:1px}
header span{flex:1}
header button{display:flex;--s:14px;height:14px;width:17px;align-items:center;justify-content:center}
header button:last-child{border:1px solid #b9cdf2;margin-left:1px;--s:12px}
.b{height:22px;border:1px solid #a0a0a0;border-top-color:#fff;background:#f0f0f0;flex:none;text-align:center}
header+.b{margin-top:1px;border-top-color:#a0a0a0}
.t{display:flex;align-items:center;gap:7px;height:26px;margin:1px 1px 0;padding-left:6px;background:linear-gradient(#fdfdfd,#ececec);flex:none}
.box{flex:1;min-height:0;display:flex;flex-direction:column;border:1px solid #828790;outline:1px solid #c8c8c8;background:#fff;margin:0 2px 2px;}
.r{flex:1;min-height:0;display:flex}
.tree{flex:1;min-width:0;overflow:hidden;padding-top:1px}
.mark{margin-left:-4px;--s:14px}
.hs{background:#f0f0f0;padding-right:16px}`, `
<header><span>模块导航栏</span><button aria-label="固定"><ui-icon name="pin"></ui-icon></button><button aria-label="关闭"><ui-icon name="close"></ui-icon></button></header>
<button class="b">工程设置</button><button class="b">绘图输入</button>
<div class="t"><ui-icon name="plusplus"></ui-icon><ui-icon name="minusminus"></ui-icon></div>
<div class="box"><div class="r"><div class="tree">${NAV.map(([k, i, t, a = '']) => `<tree-row level="${k === 'k' ? 2 : 1}" icon="${i}" text="${t}" ${a}>${i === 'line' ? '<ui-icon class="mark" name="book"></ui-icon>' : ''}</tree-row>`).join('')}</div><scroll-bar before="36%" size="57%"></scroll-bar></div>
<div class="hs"><scroll-bar horizontal before="2px" size="102px"></scroll-bar></div></div>
<button class="b">单构件输入</button><button class="b">报表预览</button>`);

/* ---------- component list ---------- */
define('part-list', `
:host{display:flex;flex-direction:column;width:184px;flex:none;padding-top:3px}
.q{display:flex;height:27px;background:#fff;border:1px solid #d0d0d0;border-right-color:#808080;border-bottom:0;padding:1px 0}
input{width:157px;height:24px;border:1px solid #6d6d6d;padding:0 2px 4px;outline:0}
input::placeholder{color:#787878;opacity:1}
.q button{flex:1;display:flex;align-items:center;justify-content:center;--s:15px}
.box{flex:1;background:#fff;border:1px solid #828790;padding-top:1px;--sel:#316ac5;overflow:hidden}
.box tree-row[level="2"]{margin-left:-1px}`, `
<div class="q"><input type="text" aria-label="搜索构件" placeholder="搜索构件..."><button aria-label="搜索"><ui-icon name="search"></ui-icon></button></div>
<div class="box"><tree-row level="1" icon="beam" text="梁"></tree-row><tree-row level="2" icon="gear" text="L-1"></tree-row><tree-row level="2" icon="gear" text="KL-2"></tree-row><tree-row level="2" icon="gear" text="XL-3"></tree-row><tree-row level="2" icon="gear" text="KZL-1" last selected></tree-row></div>`);

/* ---------- property grid ---------- */
const REBAR = '<svg width="14" height="12" viewBox="0 0 14 12" role="img" aria-label="三级钢"><path d="M7.500 1v10M2 10.500h11M4.500 4h6.500v4h-6.500zM2 6.500h2" fill="none" stroke="#000" shape-rendering="crispEdges"/></svg>';
/* number, label, value, checkbox, style */
const PROPS = [
  [1, '名称', 'KZL-1', 0, 'on'], [2, '类别', '框支梁', 1, 'bl'], [3, '截面宽度(mm)', '200', 1], [4, '截面高度(mm)', '550', 1],
  [5, '轴线距梁左边线距离(mm)', '(100)', 1], [6, '跨数量', '2', 1], [7, '箍筋', REBAR + '8@100/200(4)', 1, 'bl'], [8, '肢数', '4', 0, 'bl'],
  [9, '上部通长筋', '2' + REBAR + '25', 1, 'bl'], [10, '下部通长筋', '4' + REBAR + '25', 1, 'bl'], [11, '侧面构造或受扭筋(总配筋值)', '', 1, 'bl'],
  [12, '拉筋', '', 1, 'bl'], [13, '其它箍筋', '', 0, 'bl'], [14, '备注', '', 1], [15, '其它属性', '', 0, 'gr'], [23, '锚固搭接', '', 0, 'gr'], [38, '显示样式', '', 0, 'gr']
];
define('property-grid', `
:host{display:block;position:relative;flex:none;align-self:flex-start}
table{border-collapse:separate;border-spacing:0;table-layout:fixed;width:370px;font:12px/16px var(--song)}
td,th{border-right:1px solid #c0c0c0;border-bottom:1px solid #c0c0c0;padding:0;height:19px;font-weight:normal;white-space:nowrap;text-align:left}
thead th{height:23px;text-align:center;background:linear-gradient(#fcfcfc,#ededed)}
thead .v{background:linear-gradient(#f8d69c,#efbe5d);color:#4b0055}
tbody th{background:linear-gradient(#fcfcfc,#eee);text-align:center}
tbody th,.v{font-size:11px;font-family:"Liberation Sans","Noto Sans CJK SC",sans-serif}
thead .v,.cn{font-size:12px}
td.v{padding-left:2px}
td.n{padding:2px 0 0 20px}
.bl .n{color:#00f}.gr .n{color:#858585;padding-left:2px}
.on th{background:#ffd48a;color:#4b0055}.on .n{background:#0078d7;color:#fff}.on td.v{background:#d9eaf9}
.n button{width:13px;height:13px;border:1px solid #c0c0c0;color:#000;margin-right:5px;display:inline-grid;place-items:center;vertical-align:-2px}
.n button svg{display:block}
.v svg{vertical-align:-2px}
td.c{text-align:center}
input{appearance:none;width:13px;height:13px;border:1px solid #333;background:#fff;display:block;margin:auto}
.mark{position:absolute;left:176px;top:3px;width:125px;height:64px;border:3px solid #f00;pointer-events:none}`, `
<table><colgroup><col style="width:22px"><col style="width:191px"><col style="width:126px"><col style="width:31px"></colgroup>
<thead><tr><th></th><th>属性名称</th><th class="v">属性值</th><th>附加</th></tr></thead>
<tbody>${PROPS.map(([n, l, v, c, s = '']) => `<tr class="${s}"><th>${n}</th><td class="n">${s === 'gr' ? `<button aria-label="展开${l}"><svg width="9" height="9" aria-hidden="true"><path d="M0 4.500h9M4.500 0v9" stroke="#000"/></svg></button>` : ''}${l}</td><td class="v${v === '框支梁' ? ' cn' : ''}">${v}</td><td class="c">${c ? `<input type="checkbox" aria-label="附加 ${l}">` : ''}</td></tr>`).join('')}</tbody></table>
<div class="mark"></div>`);

/* ---------- stirrup section drawing ---------- */
define('stirrup-view', `
:host{display:block;flex:none;width:268px;height:283px;margin:0 0 0 auto;border:1px solid #4c4c4c;background:linear-gradient(#bccbdb,#d7e3f1 34px);box-shadow:inset 0 0 0 1px #fff8;padding:11px 7px 0}
h2{font:12px/16px var(--ui);color:#8f959b;margin:0 0 3px}
svg{display:block;background:#000;border:1px solid #fff;border-right-color:#999;border-bottom-color:#999}
text{font-family:"Liberation Serif","Noto Sans CJK SC",serif;fill:#fff}`, `
<h2>箍筋图</h2>
<svg width="253" height="244" viewBox="1084 169 251 242" role="img" aria-label="箍筋图">
<path d="M1140.500 188.500h155v173h-155z" fill="none" stroke="#fff"/>
<path d="M1149 196h138v157h-138zM1191 181h52v157h-52zM1284 197l-9 9M1287 201l-8 9M1240 182l-9 8M1243 186l-7 6" fill="none" stroke="#f00" stroke-width="2"/>
<g fill="#f00"><circle cx="1152" cy="200" r="4"/><circle cx="1283" cy="200" r="4"/><circle cx="1152" cy="349" r="4"/><circle cx="1283" cy="349" r="4"/><circle cx="1194" cy="184" r="4"/><circle cx="1239" cy="184" r="4"/><circle cx="1194" cy="334" r="4"/><circle cx="1239" cy="334" r="4"/></g>
<path d="m1145 231 13-7M1188 225l13-8" stroke="#fff"/><circle cx="1148.500" cy="228.500" r="2.200" fill="#fff"/><circle cx="1190.500" cy="223" r="2.200" fill="#fff"/>
<text x="1156" y="225" font-size="18">1#</text><text x="1199" y="223" font-size="18">2#</text>
<text x="1210" y="376" font-size="16">B</text><text transform="translate(1138 290) rotate(-90)" font-size="16">H</text>
<text x="1181" y="398" font-size="20">4-1型</text></svg>`);

define('editor-pane', `
:host{display:flex;flex-direction:column;flex:1;min-width:0;padding-right:3px}
.tabs{display:flex;height:21px;flex:none}
.tabs button{width:63px;background:#fff;border:1px solid #dadada;border-bottom:0;padding-bottom:2px}
.tabs div{flex:1;border-bottom:1px solid #dadada;background:#fff}
.pg{flex:1;display:flex;border:1px solid #dadada;border-top:0;background:#fff;padding:3px 2px 2px;min-height:0}
.in{flex:1;display:flex;border:1px solid #a0a0a0;min-height:0}
.in property-grid{margin-top:1px}`, `
<div class="tabs"><button>属性编辑</button><div></div></div>
<div class="pg"><div class="in"><property-grid></property-grid><stirrup-view></stirrup-view><scroll-bar before="0px" size="60%"></scroll-bar></div></div>`);

/* ---------- status bar ---------- */
define('status-bar', `
:host{display:flex;gap:3px;height:20px;font:12px/16px var(--song)}
span{border:1px solid #d5d5d5;background:linear-gradient(#fdfdfd,#f0f0f0);padding:1px;white-space:nowrap;overflow:hidden}
.w1{width:147px}.w2{width:77px}.w3{width:98px}.w4{width:47px}.w5{flex:1}.w6{width:70px}`, `
<span class="w1"></span><span class="w2">层高:2.8m</span><span class="w3">底标高:17.55m</span><span class="w4">0</span><span class="w5">名称在当前层当前构件类型下不允许重名</span><span class="w6">742.2 FPS</span>`);

/* ---------- taskbar ---------- */
define('task-bar', `
:host{display:flex;height:40px;background:#000c10;color:#fff;--s:22px}
button{display:grid;place-items:center;width:48px;height:40px}
.st{background:#000;--s:16px}
.q{display:flex;align-items:center;width:344px;background:#333;padding:0 13px 0 8px;gap:6px}
.q input{flex:1;font-size:14px;height:30px;outline:0}
.q input::placeholder{color:#a0a0a0;opacity:1}
.q ui-icon:last-child{--s:16px}
.apps{display:flex;gap:2px;flex:1}
.apps button{border-bottom:2px solid transparent;border-top:2px solid transparent}
.apps .run{border-bottom-color:#76b9ed}
.apps .act{background:#333e42;border-top-color:#333e42}
.apps .tv{--s:20px}
.tray{display:flex;align-items:center;gap:8px;--s:16px}
.tray .k{--s:23px}.tray .s{margin-left:4px}
time{width:78px;text-align:center;line-height:18px;font-size:12px;margin-left:-2px;margin-right:-16px;white-space:nowrap}
.n{width:56px;border-right:1px solid #555;margin-right:4px;--s:17px}`, `
<button class="st" aria-label="开始"><ui-icon name="win"></ui-icon></button>
<label class="q"><ui-icon name="cortana"></ui-icon><input type="text" aria-label="搜索" placeholder="在这里输入你要搜索的内容"><ui-icon name="tmic"></ui-icon></label>
<div class="apps"><button class="tv" aria-label="任务视图"><ui-icon name="taskview"></ui-icon></button>${[['fan'], ['ewhite'], ['gwhite'], ['edge'], ['ie'], ['explorer'], ['gblue', 'run'], ['egreen', 'run'], ['app', 'run act'], ['note', 'run']].map(([i, c = '']) => `<button class="${c}" aria-label="${i}"><ui-icon name="${i}"></ui-icon></button>`).join('')}</div>
<div class="tray"><span>链接</span><ui-icon name="tup"></ui-icon><ui-icon name="battery"></ui-icon><ui-icon name="wifi"></ui-icon><ui-icon name="volume"></ui-icon><ui-icon class="k" name="tkbd"></ui-icon><ui-icon name="tA"></ui-icon><ui-icon class="s" name="sogou"></ui-icon><time>11:47<br>2018/5/14</time><button class="n" aria-label="通知"><ui-icon name="notice"></ui-icon></button></div>`);

/* ---------- shell ---------- */
define('ggj-app', `
:host{display:flex;flex-direction:column;height:100vh}
main{flex:1;min-height:0;display:flex;gap:6px;padding-bottom:3px}
section{flex:1;min-width:0;display:flex;flex-direction:column}
.row{flex:1;min-height:0;display:flex;gap:4px}
part-list,.row{min-height:0}`, `
<title-bar></title-bar><menu-bar></menu-bar><main-tools></main-tools>
<main><module-nav></module-nav><section><part-tools></part-tools><div class="row"><part-list></part-list><editor-pane></editor-pane></div></section></main>
<status-bar></status-bar><task-bar></task-bar>`);
</script>
</body>
</html>
